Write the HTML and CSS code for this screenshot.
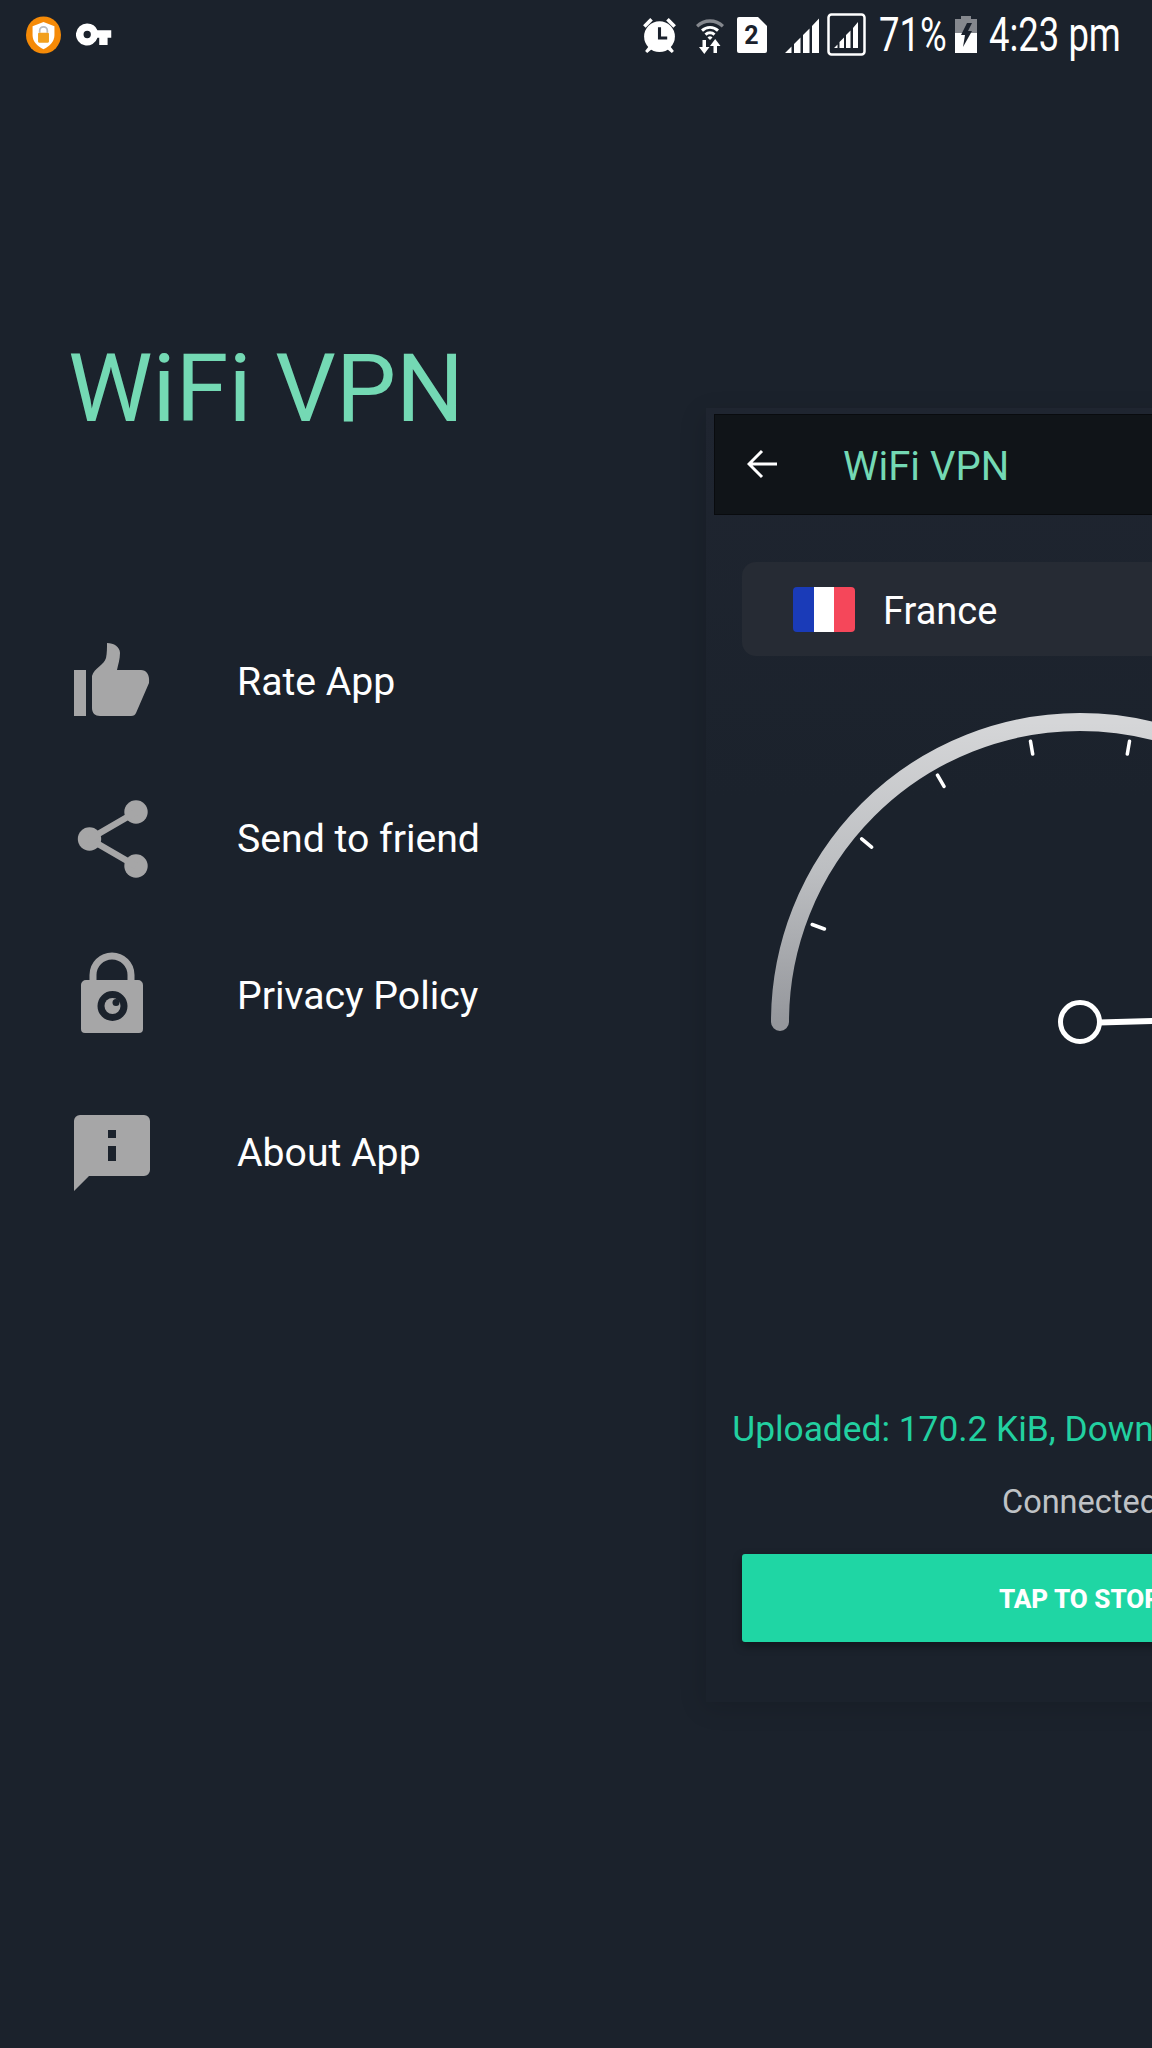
FILE: index.html
```html
<!DOCTYPE html>
<html lang="en">
<head>
<meta charset="utf-8">
<title>WiFi VPN</title>
<link rel="stylesheet" href="styles.css">
</head>
<body>
<div class="screen">
  <header class="status">
    <div class="status-left">
      <svg class="ic-vpn" viewBox="0 0 32 34"><ellipse cx="16" cy="17" rx="16" ry="17" fill="#f58a07"/><path d="M16 5l10 4v8c0 6-4 10-10 13C10 27 6 23 6 17V9z" fill="#fff"/><path d="M12.500 15v-2a3.500 3.500 0 0 1 7 0v2" fill="none" stroke="#b9bcc0" stroke-width="1.600"/><rect x="11" y="15" width="10" height="9" rx="1" fill="#f2a01e"/></svg>
      <svg class="ic-key" viewBox="0 0 34 22"><path fill-rule="evenodd" d="M10.500 0.500a10.500 10.500 0 0 1 9.800 6.500H33.500v7H30v7h-8v-7h-1.700a10.500 10.500 0 1 1-9.800-13.500zm0 7a3.500 3.500 0 1 0 0 7 3.500 3.500 0 0 0 0-7z" fill="#fff"/></svg>
    </div>
    <div class="status-right">
      <svg class="ic-alarm" viewBox="0 0 34 37"><path d="M1 9l7-7 2.500 2.500-7 7zM33 9l-7-7-2.500 2.500 7 7z" fill="#fff"/><path d="M7 29l-4 5 2 2 5-4zM27 29l4 5-2 2-5-4z" fill="#fff"/><circle cx="17" cy="20" r="15" fill="#fff"/><path d="M15.500 11h3v9h6v3h-9z" fill="#1a212c"/></svg>
      <svg class="ic-wifi" viewBox="0 0 30 38"><path d="M1 9a20 20 0 0 1 28 0l-2.200 2.500a17 17 0 0 0-23.600 0z" fill="#85888e"/><path d="M6 13.500a13 13 0 0 1 18 0l-2 2.200a10 10 0 0 0-14 0z" fill="#fff"/><path d="M9.500 17.500a8 8 0 0 1 11 0l-2 2.200a5 5 0 0 0-7 0z" fill="#fff"/><path d="M12.500 21.500a3.500 3.500 0 0 1 5 0L15 24z" fill="#fff"/><path d="M7.500 24h3.500v7h3.500l-5.200 7-5.300-7h3.500zM18.500 37h3.500v-7h3.500l-5.300-7-5.200 7h3.500z" fill="#fff"/></svg>
      <svg class="ic-sim" viewBox="0 0 30 36"><path d="M2 0h19l9 9v25a2 2 0 0 1-2 2H2a2 2 0 0 1-2-2V2a2 2 0 0 1 2-2z" fill="#fff"/><text x="14.500" y="27" class="sim-num">2</text></svg>
      <svg class="ic-sig" viewBox="0 0 34 37"><path d="M0 37l6.500-6.500V37zM9 37V28l6.500-6.500V37zM18 37V19l6.500-6.500V37zM27 37V10l7-7.500V37z" fill="#fff"/></svg>
      <svg class="ic-sigbox" viewBox="0 0 39 43"><rect x="1.500" y="1.500" width="36" height="40" rx="3" fill="none" stroke="#fff" stroke-width="2.500"/><path d="M7 35l3.500-3.500V35zM12.500 35v-6l4.500-4.500V35zM19 35V22l4.500-4.500V35zM26 35V15l5-6v26z" fill="#fff"/></svg>
      <span class="pct"><span class="narrow">71%</span></span>
      <svg class="ic-batt" viewBox="0 0 22 37"><rect x="6" y="0" width="10" height="4" fill="#85888e"/><rect y="3" width="22" height="14" fill="#85888e"/><rect y="17" width="22" height="20" fill="#fff"/><path d="M12 7h5l-4 8h4L8 31l2-12H6z" fill="#1a212c"/></svg>
      <span class="time"><span class="narrow">4:23 pm</span></span>
    </div>
  </header>

  <div class="body">
    <aside class="drawer">
      <h1 class="brand">WiFi VPN</h1>
      <nav class="menu">
        <div class="item">
          <svg class="item-ic ic-up" viewBox="0 0 76 76"><path d="M0 27h12v46H0z"/><path d="M18 33C20 25 30 22 32 15C33 10 33 5 33 0C40 0 46 4 46 10C46 16 44 22 43 27H67C72 27 76 31 75 40L62 70C61 72 60 73 57 73H26C21 73 18 70 18 65Z"/></svg>
          <span class="item-label">Rate App</span>
        </div>
        <div class="item">
          <svg class="item-ic" viewBox="0 0 76 76"><circle cx="15.500" cy="38" r="11.700"/><circle cx="62" cy="11" r="11.700"/><circle cx="62" cy="65" r="11.700"/><path class="share-line" d="M15.500 38L62 11M15.500 38L62 65"/></svg>
          <span class="item-label">Send to friend</span>
        </div>
        <div class="item">
          <svg class="item-ic" viewBox="0 5 76 76"><path class="shackle" d="M19 30V22a19 19 0 0 1 38 0v8"/><path fill-rule="evenodd" d="M12 27h52a5 5 0 0 1 5 5v44a4 4 0 0 1-4 4H11a4 4 0 0 1-4-4V32a5 5 0 0 1 5-5zM38.500 38a15 15 0 1 0 0 30 15 15 0 0 0 0-30z"/><circle cx="38.500" cy="53" r="8"/><circle class="notch" cx="42" cy="49.500" r="3.500"/></svg>
          <span class="item-label">Privacy Policy</span>
        </div>
        <div class="item">
          <svg class="item-ic" viewBox="0 0 76 76"><path fill-rule="evenodd" d="M6 0h64a6 6 0 0 1 6 6v49a6 6 0 0 1-6 6H15L0 76V6a6 6 0 0 1 6-6zM34 15v8h8v-8zM34 31v15h8V31z"/></svg>
          <span class="item-label">About App</span>
        </div>
      </nav>
    </aside>

    <main class="panel">
      <div class="appbar">
        <svg class="back" viewBox="0 0 32 30"><path d="M30 15H3M15 2L2 15l13 13" fill="none" stroke="#fff" stroke-width="3"/></svg>
        <span class="appbar-title">WiFi VPN</span>
      </div>
      <div class="country">
        <div class="flag"><span class="flag-b"></span><span class="flag-w"></span><span class="flag-r"></span></div>
        <span class="country-name">France</span>
      </div>
      <svg class="gauge" viewBox="0 0 748 702">
        <defs>
          <linearGradient id="arc" x1="0" y1="1" x2="0" y2="0">
            <stop offset="0" stop-color="#95979c"/>
            <stop offset="0.5" stop-color="#bcbec1"/>
            <stop offset="1" stop-color="#d5d6d8"/>
          </linearGradient>
        </defs>
        <path d="M74 316a300 300 0 0 1 600 0" fill="none" stroke="url(#arc)" stroke-width="18" stroke-linecap="round"/>
        <g stroke="#fff" stroke-width="3.500" stroke-linecap="round">
          <path d="M106.200 218.500L118.400 223M155.700 132.800L165.600 141.200M231.500 69.200L238 80.400M324.500 35.300L326.700 48.100M423.500 35.300L421.300 48.100M516.500 69.200L510 80.400M592.300 132.800L582.400 141.200M641.800 218.500L629.600 223"/>
        </g>
        <circle cx="374" cy="316" r="19.500" fill="#1b222c" stroke="#fff" stroke-width="5"/>
        <path d="M393 316.500L560 312" stroke="#fff" stroke-width="6"/>
      </svg>
      <p class="traffic">Uploaded: 170.2 KiB, Downloaded: 511.3 KiB</p>
      <p class="state">Connected</p>
      <div class="cta">TAP TO STOP</div>
    </main>
  </div>
</div>
</body>
</html>
```
FILE: styles.css
```css
html, body { margin: 0; padding: 0; background: #1b222c; }
.screen { width: 1152px; height: 2048px; overflow: hidden; background: #1b222c; font-family: Roboto, "Liberation Sans", sans-serif; color: #fff; }
.status { height: 68px; display: flex; justify-content: space-between; align-items: center; padding: 1px 32px 0 26px; box-sizing: border-box; }
.status-left { display: flex; align-items: center; gap: 15px; }
.status-right { display: flex; align-items: center; }
.ic-vpn { width: 35px; height: 38px; }
.ic-key { width: 36px; height: 23px; }
.ic-alarm { width: 35px; height: 38px; margin-right: 18px; }
.ic-wifi { width: 30px; height: 38px; margin-right: 12px; }
.ic-sim { width: 30px; height: 36px; margin-right: 18px; }
.sim-num { font: 700 25px Roboto, sans-serif; fill: #1a212c; text-anchor: middle; }
.ic-sig { width: 34px; height: 37px; margin-right: 8px; }
.ic-sigbox { width: 39px; height: 43px; margin-right: 13px; }
.pct { width: 65px; margin-right: 11px; }
.ic-batt { width: 22px; height: 37px; margin-right: 12px; }
.time { width: 131px; }
.pct, .time { display: block; font-size: 48px; line-height: 48px; white-space: nowrap; }
.narrow { display: inline-block; transform: scaleX(.76); transform-origin: left center; }

.body { display: flex; height: 1980px; align-items: flex-start; }
.drawer { width: 706px; flex: none; padding: 273px 0 0 68px; box-sizing: border-box; }
.brand { margin: 0; font-size: 95.300px; font-weight: 400; line-height: 1; color: #74d9b4; }
.menu { margin-top: 206px; display: flex; flex-direction: column; gap: 77px; }
.item { display: flex; align-items: center; height: 80px; }
.item-ic { width: 76px; height: 76px; flex: none; margin-left: 6px; overflow: visible; fill: #a6a6a7; }
.ic-up { margin-top: -3px; }
.share-line { fill: none; stroke: #a6a6a7; stroke-width: 6.500; }
.shackle { fill: none; stroke: #a6a6a7; stroke-width: 7; }
.notch { fill: #1b222c; }
.item-label { margin-left: 87px; font-size: 39.200px; color: #fff; }

.panel { width: 748px; flex: none; height: 1294px; margin-top: 340px; box-sizing: border-box; background: linear-gradient(#1f2530, #1b222c 30%); box-shadow: -3px 6px 24px rgba(0,0,0,.12); display: flex; flex-direction: column; overflow: hidden; }
.appbar { margin: 6px 0 0 8px; height: 101px; flex: none; display: flex; align-items: center; background: #101418; box-shadow: inset 0 0 0 1px #090b0e; }
.back { width: 32px; height: 30px; margin: -2px 0 0 33px; }
.appbar-title { margin-left: 64px; padding-top: 4px; font-size: 40px; color: #74d9b4; }
.country { margin: 47px 36px 0; height: 94px; flex: none; border-radius: 14px; background: #262b34; display: flex; align-items: center; }
.flag { margin-left: 51px; width: 62px; height: 45px; display: flex; border-radius: 4px; overflow: hidden; }
.flag-b { flex: 1; background: #1a3bb8; }
.flag-w { flex: 1; background: #fff; }
.flag-r { flex: 1; background: #f5475a; }
.country-name { margin-left: 28px; padding-top: 4px; font-size: 38px; }
.gauge { width: 748px; height: 702px; flex: none; margin-top: 50px; }
.traffic { margin: 0; text-align: center; font-size: 35.300px; color: #22d0a0; white-space: nowrap; }
.state { margin: 33px 0 0; text-align: center; font-size: 32.500px; color: #bfc2c6; }
.cta { margin: 33px 36px 0; height: 88px; flex: none; border-radius: 3px; background: #1fd6a4; box-shadow: 0 4px 10px rgba(0,0,0,.35); display: flex; align-items: center; justify-content: center; padding-top: 1px; box-sizing: border-box; font-size: 26px; font-weight: 800; }
```
